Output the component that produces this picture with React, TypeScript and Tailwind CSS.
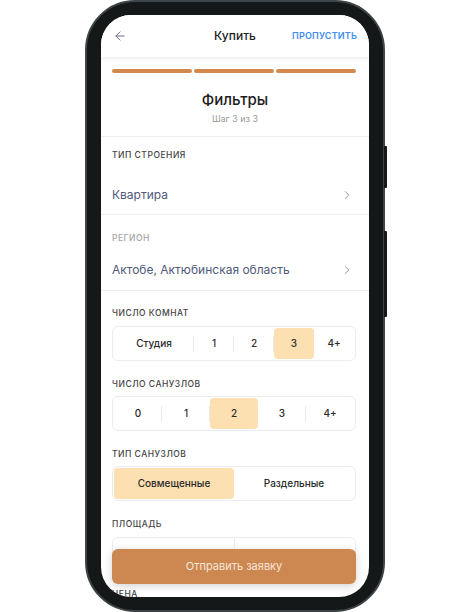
import React from "react";
import { ArrowLeft, ChevronRight } from "lucide-react";

const font = { fontFamily: "Inter, 'Noto Sans', sans-serif" };

function Seg({
  items,
  selected,
  widths,
}: {
  items: string[];
  selected: number;
  widths?: string[];
}) {
  return (
    <div className="flex h-[35px] rounded-[6px] border border-[#ececec] p-[1px]">
      {items.map((it, i) => (
        <React.Fragment key={i}>
          {i > 0 && (
            <div className="flex w-0 items-center">
              {i - 1 !== selected && (
                <div className="h-[16px] w-px shrink-0 -translate-x-px bg-[#e9e9e9]" />
              )}
            </div>
          )}
          <div
            className={
              (widths ? widths[i] : "flex-1") +
              " flex items-center justify-center rounded-[4px] text-[10px] font-medium text-[#2a2a2a] " +
              (i === selected ? "bg-[#fde0b2]" : "")
            }
          >
            {it}
          </div>
        </React.Fragment>
      ))}
    </div>
  );
}

export default function App() {
  return (
    <div className="relative h-[612px] w-[470px] bg-white" style={font}>
      <div className="absolute left-[85px] top-0 h-[612px] w-[300px]">
        {/* side buttons */}
        <div className="absolute right-[-2px] top-[146px] h-[42px] w-[3px] rounded-r-[1px] bg-[#141819]" />
        <div className="absolute right-[-2px] top-[231px] h-[86px] w-[3px] rounded-r-[1px] bg-[#141819]" />
        <div className="h-full w-full rounded-[50px] border-[2px] border-[#3e4548] bg-[#141819] px-[14px] pb-[13px] pt-[13px]">
          <div className="relative h-full w-full overflow-hidden rounded-[30px] bg-white">
            {/* header */}
            <div className="relative z-10 flex h-[42px] items-center justify-between bg-white pl-[12px] pr-[12px] shadow-[0_2px_4px_rgba(0,0,0,0.07)]">
              <ArrowLeft size={14} strokeWidth={1.6} className="text-[#5b667d]" />
              <div className="absolute left-0 right-0 text-center text-[12px] font-medium text-[#222]">Купить</div>
              <div className="text-[9px] font-semibold tracking-[0.02em] text-[#3d8df2]">ПРОПУСТИТЬ</div>
            </div>
            <div className="pl-[11px] pr-[13px]">
              <div className="mt-[12px] flex h-[4px] gap-[2px]">
                <div className="flex-1 rounded-full bg-[#d4894f]" />
                <div className="flex-1 rounded-full bg-[#d4894f]" />
                <div className="flex-1 rounded-full bg-[#d4894f]" />
              </div>
            </div>
            <div className="border-b border-[#eeeeee] pb-[11px] pt-[17px] text-center">
              <div className="text-[15px] font-medium leading-[20px] text-[#1d1d1d]">Фильтры</div>
              <div className="mt-[3px] text-[9px] leading-[12px] text-[#9a9a9a]">Шаг 3 из 3</div>
            </div>
            {/* section 1 */}
            <div className="border-b border-[#eeeeee] pl-[11px] pr-[15px]">
              <div className="pt-[12px] text-[8.5px] font-medium leading-[12px] tracking-[0.06em] text-[#444]">ТИП СТРОЕНИЯ</div>
              <div className="mt-[15px] flex h-[38px] items-center justify-between">
                <span className="text-[12px] text-[#4f5a78]">Квартира</span>
                <ChevronRight size={14} strokeWidth={1.6} className="text-[#8c929c]" />
              </div>
            </div>
            {/* section 2 */}
            <div className="border-b border-[#eeeeee] pl-[11px] pr-[15px]">
              <div className="pt-[17px] text-[8.5px] font-medium leading-[12px] tracking-[0.06em] text-[#a3a3a3]">РЕГИОН</div>
              <div className="mt-[6px] flex h-[40px] items-center justify-between">
                <span className="text-[12px] text-[#4f5a78]">Актобе, Актюбинская область</span>
                <ChevronRight size={14} strokeWidth={1.6} className="text-[#8c929c]" />
              </div>
            </div>
            {/* rest */}
            <div className="pl-[11px] pr-[13px]">
              <div className="pt-[16px] text-[8.5px] font-medium leading-[12px] tracking-[0.06em] text-[#444]">ЧИСЛО КОМНАТ</div>
              <div className="mt-[7px]">
                <Seg
                  items={["Студия", "1", "2", "3", "4+"]}
                  selected={3}
                  widths={["w-[80px]", "w-[40px]", "w-[40px]", "w-[40px]", "flex-1"]}
                />
              </div>
              <div className="mt-[17px] text-[8.5px] font-medium leading-[12px] tracking-[0.06em] text-[#444]">ЧИСЛО САНУЗЛОВ</div>
              <div className="mt-[6px]">
                <Seg items={["0", "1", "2", "3", "4+"]} selected={2} />
              </div>
              <div className="mt-[17px] text-[8.5px] font-medium leading-[12px] tracking-[0.06em] text-[#444]">ТИП САНУЗЛОВ</div>
              <div className="mt-[6px]">
                <Seg items={["Совмещенные", "Раздельные"]} selected={0} />
              </div>
              <div className="mt-[17px] text-[8.5px] font-medium leading-[12px] tracking-[0.06em] text-[#444]">ПЛОЩАДЬ</div>
              <div className="mt-[7px] flex h-[35px] rounded-[6px] border border-[#ececec]">
                <div className="flex-1 border-r border-[#ececec]" />
                <div className="flex-1" />
              </div>
              <div className="mt-[16px] text-[8.5px] font-medium leading-[12px] tracking-[0.06em] text-[#444]">ЦЕНА</div>
            </div>
            {/* floating button */}
            <div className="absolute bottom-[13px] left-[11px] right-[13px] flex h-[35px] items-center justify-center rounded-[6px] bg-[#cd8751] text-[11px] text-[#f6e6d8] shadow-[0_2px_8px_rgba(0,0,0,0.18)]">
              Отправить заявку
            </div>
          </div>
        </div>
      </div>
    </div>
  );
}
